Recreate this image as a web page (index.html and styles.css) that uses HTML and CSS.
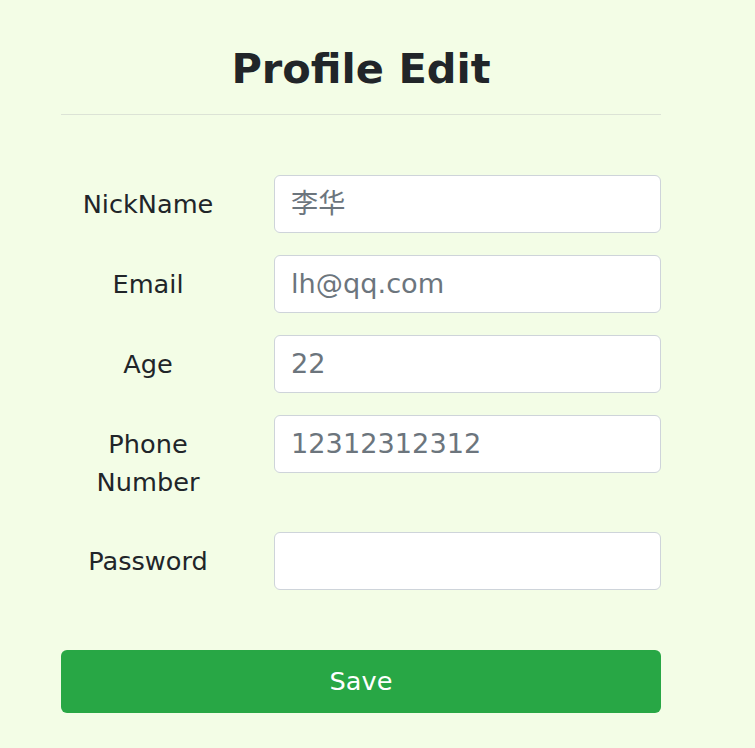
FILE: index.html
```html
<!DOCTYPE html>
<html lang="en">
<head>
<meta charset="utf-8">
<title>Profile Edit</title>
<link rel="stylesheet" href="styles.css">
</head>
<body>
<main class="page">
  <h1 class="title">Profile Edit</h1>
  <hr class="rule">
  <form class="form">
    <label class="label" for="nick">NickName</label>
    <input class="field" id="nick" type="text" placeholder="李华">
    <label class="label" for="email">Email</label>
    <input class="field" id="email" type="text" placeholder="lh@qq.com">
    <label class="label" for="age">Age</label>
    <input class="field" id="age" type="text" placeholder="22">
    <label class="label" for="phone">Phone<br>Number</label>
    <input class="field" id="phone" type="text" placeholder="12312312312">
    <label class="label" for="pwd">Password</label>
    <input class="field" id="pwd" type="password">
    <button class="save" type="button">Save</button>
  </form>
</main>
</body>
</html>
```
FILE: styles.css
```css
html, body {
  margin: 0;
  padding: 0;
  background: #f3fde6;
}
body {
  font-family: "DejaVu Sans", Verdana, sans-serif;
  color: #212529;
}
.page {
  width: 600px;
  margin-left: 61px;
  padding-top: 44px;
}
.title {
  margin: 0;
  text-align: center;
  font-size: 41.5px;
  font-weight: bold;
  line-height: 1.2;
  color: #212529;
}
.rule {
  margin: 20px 0 0;
  border: 0;
  border-top: 1px solid #dce3d6;
}
.form {
  display: grid;
  grid-template-columns: 174px 1fr;
  column-gap: 39px;
  row-gap: 22px;
  margin-top: 60px;
  align-items: start;
}
.label {
  font-size: 25.6px;
  line-height: 38.4px;
  padding: 10px 0 8px;
  text-align: center;
}
.field {
  box-sizing: border-box;
  height: 58px;
  width: 100%;
  margin: 0;
  padding: 0 16px;
  font-family: "DejaVu Sans", Verdana, "Noto Sans CJK SC", sans-serif;
  font-size: 27.2px;
  color: #495057;
  background: #fff;
  border: 1px solid #ced4da;
  border-radius: 6px;
  outline: none;
}
.field::placeholder {
  color: #6c757d;
  opacity: 1;
}
.save {
  grid-column: 1 / -1;
  margin-top: 38px;
  height: 63px;
  border: 0;
  border-radius: 6px;
  background: #28a745;
  color: #fff;
  font-family: "DejaVu Sans", Verdana, sans-serif;
  font-size: 25.6px;
  cursor: pointer;
}
```
